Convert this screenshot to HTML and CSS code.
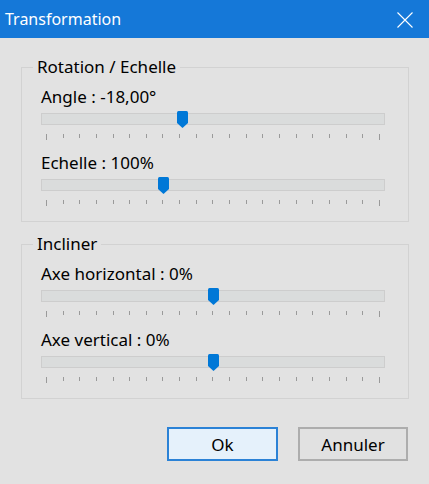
FILE: index.html
```html
<!DOCTYPE html>
<html>
<head>
    <title>Transformation</title>
    <meta name="viewport" content="width=device-width, initial-scale=1.0">
    <link rel="stylesheet" href="styles.css">
</head>
<body>
    <div class="window">
        <div class="titlebar">
            <span class="title">Transformation</span>
            <svg class="close" width="16" height="16" viewBox="0 0 16 16" fill="none" stroke="#ffffff" stroke-width="1.1">
                <path d="M0.5 0.5L15.5 15.5M15.5 0.5L0.5 15.5"/>
            </svg>
        </div>
        <div class="content">
            <fieldset class="group">
                <legend>Rotation / Echelle</legend>
                <div class="field">
                    <div class="label">Angle : -18,00°</div>
                    <div class="slider">
                        <div class="track"></div>
                        <div class="rail">
                            <svg class="thumb" style="left: 40.8%" width="11" height="17" viewBox="0 0 11 17">
                                <path d="M1.5 0H9.5Q11 0 11 1.5V12L5.5 17L0 12V1.5Q0 0 1.5 0Z" fill="#0078d7"/>
                            </svg>
                        </div>
                    </div>
                    <div class="ticks"><span class="end"></span><span></span><span></span><span></span><span></span><span></span><span></span><span></span><span></span><span></span><span></span><span></span><span></span><span></span><span></span><span></span><span></span><span></span><span></span><span></span><span class="end"></span></div>
                </div>
                <div class="field">
                    <div class="label">Echelle : 100%</div>
                    <div class="slider">
                        <div class="track"></div>
                        <div class="rail">
                            <svg class="thumb" style="left: 35%" width="11" height="17" viewBox="0 0 11 17">
                                <path d="M1.5 0H9.5Q11 0 11 1.5V12L5.5 17L0 12V1.5Q0 0 1.5 0Z" fill="#0078d7"/>
                            </svg>
                        </div>
                    </div>
                    <div class="ticks"><span class="end"></span><span></span><span></span><span></span><span></span><span></span><span></span><span></span><span></span><span></span><span></span><span></span><span></span><span></span><span></span><span></span><span></span><span></span><span></span><span></span><span class="end"></span></div>
                </div>
            </fieldset>
            <fieldset class="group">
                <legend>Incliner</legend>
                <div class="field">
                    <div class="label">Axe horizontal : 0%</div>
                    <div class="slider">
                        <div class="track"></div>
                        <div class="rail">
                            <svg class="thumb" style="left: 50%" width="11" height="17" viewBox="0 0 11 17">
                                <path d="M1.5 0H9.5Q11 0 11 1.5V12L5.5 17L0 12V1.5Q0 0 1.5 0Z" fill="#0078d7"/>
                            </svg>
                        </div>
                    </div>
                    <div class="ticks"><span class="end"></span><span></span><span></span><span></span><span></span><span></span><span></span><span></span><span></span><span></span><span></span><span></span><span></span><span></span><span></span><span></span><span></span><span></span><span></span><span></span><span class="end"></span></div>
                </div>
                <div class="field">
                    <div class="label">Axe vertical : 0%</div>
                    <div class="slider">
                        <div class="track"></div>
                        <div class="rail">
                            <svg class="thumb" style="left: 50%" width="11" height="17" viewBox="0 0 11 17">
                                <path d="M1.5 0H9.5Q11 0 11 1.5V12L5.5 17L0 12V1.5Q0 0 1.5 0Z" fill="#0078d7"/>
                            </svg>
                        </div>
                    </div>
                    <div class="ticks"><span class="end"></span><span></span><span></span><span></span><span></span><span></span><span></span><span></span><span></span><span></span><span></span><span></span><span></span><span></span><span></span><span></span><span></span><span></span><span></span><span></span><span class="end"></span></div>
                </div>
            </fieldset>
            <div class="buttons">
                <button class="btn btn-default">Ok</button>
                <button class="btn btn-cancel">Annuler</button>
            </div>
        </div>
    </div>
</body>
</html>
```

FILE: styles.css
```css
:root {
    --bg-color: #e2e2e2;
    --title-bg: #1578d8;
    --text-color: #000000;
    --group-border: #d2d2d2;
    --track-bg: #dadcdc;
    --track-border: #cdcdcd;
    --tick-color: #9a9a9a;
    --accent: #0078d7;
}

body {
    margin: 0;
    background-color: var(--bg-color);
    color: var(--text-color);
    font-family: 'Noto Sans', 'Open Sans', sans-serif;
    font-size: 17px;
}

.window {
    width: 429px;
    height: 484px;
    display: flex;
    flex-direction: column;
}

.titlebar {
    height: 38px;
    background-color: var(--title-bg);
    color: #ffffff;
    display: flex;
    align-items: center;
    justify-content: space-between;
    padding: 0 16px 0 5px;
}

.title {
    font-size: 16px;
    line-height: 20px;
}

.close {
    display: block;
    margin-top: 1px;
}

.content {
    padding: 19px 20px 0 21px;
}

.group {
    margin: 0;
    min-width: 0;
    border: 1px solid var(--group-border);
    padding: 10px 23px 14px 19px;
}

.group + .group {
    margin-top: 12px;
}

legend {
    margin-left: -8px;
    padding: 0 4px;
    line-height: 20px;
}

.field + .field {
    margin-top: 12px;
}

.label {
    line-height: 20px;
    margin-bottom: 4px;
}

.slider {
    position: relative;
    height: 17px;
}

.track {
    position: absolute;
    top: 2px;
    left: 0;
    right: 0;
    height: 10px;
    background-color: var(--track-bg);
    border: 1px solid var(--track-border);
}

.rail {
    position: relative;
    margin: 0 5px;
    height: 17px;
}

.thumb {
    position: absolute;
    top: 0;
    margin-left: -5px;
    display: block;
}

.ticks {
    display: flex;
    justify-content: space-between;
    align-items: flex-start;
    margin: 6px 5px 0;
    height: 7px;
}

.ticks span {
    width: 1px;
    height: 4px;
    background-color: var(--tick-color);
}

.ticks span.end {
    height: 6px;
}

.buttons {
    display: flex;
    justify-content: flex-end;
    gap: 20px;
    margin-top: 28px;
    padding-right: 1px;
}

.btn {
    height: 34px;
    font-family: inherit;
    font-size: 17px;
    color: var(--text-color);
    padding: 0;
    cursor: pointer;
}

.btn-default {
    width: 111px;
    background-color: #e5f1fb;
    border: 2px solid #2b82d6;
}

.btn-cancel {
    width: 110px;
    background-color: #e1e1e1;
    border: 2px solid #adadad;
}
```
